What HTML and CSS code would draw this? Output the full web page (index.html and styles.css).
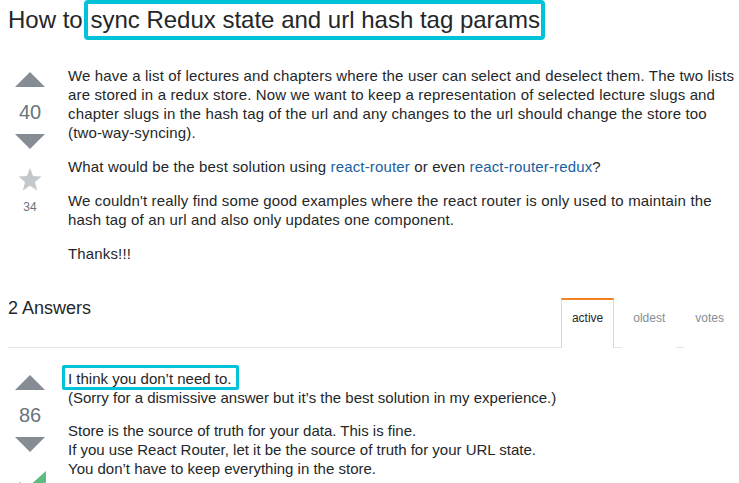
FILE: index.html
```html
<!DOCTYPE html>
<html lang="en">
<head>
<meta charset="utf-8">
<title>How to sync Redux state and url hash tag params</title>
<link rel="stylesheet" href="styles.css">
</head>
<body>
<div class="page">
  <h1 class="title">How to <span class="hl-title">sync Redux state and url hash tag params</span></h1>

  <div class="post question">
    <div class="votecell">
      <span class="arrow up"></span>
      <span class="count">40</span>
      <span class="arrow down"></span>
      <svg class="star" width="24" height="23" viewBox="0 0 24 23" aria-hidden="true">
        <polygon points="12,0 15.1,7.9 23.6,8.5 17,13.9 19.1,22.4 12,17.8 4.9,22.4 7,13.9 0.4,8.5 8.9,7.9" fill="#c4c8cc"/>
      </svg>
      <span class="favcount">34</span>
    </div>
    <div class="postcell question-text">
      <p>We have a list of lectures and chapters where the user can select and deselect them. The two lists are stored in a redux store. Now we want to keep a representation of selected lecture slugs and chapter slugs in the hash tag of the url and any changes to the url should change the store too (two-way-syncing).</p>
      <p>What would be the best solution using <a href="#">react-router</a> or even <a href="#">react-router-redux</a>?</p>
      <p>We couldn't really find some good examples where the react router is only used to maintain the hash tag of an url and also only updates one component.</p>
      <p>Thanks!!!</p>
    </div>
  </div>

  <div class="answers-header">
    <h2 class="answers-title">2 Answers</h2>
    <div class="tabs">
      <a class="tab active" href="#">active</a>
      <a class="tab" href="#">oldest</a>
      <a class="tab" href="#">votes</a>
    </div>
  </div>

  <div class="post answer">
    <div class="votecell">
      <span class="arrow up"></span>
      <span class="count">86</span>
      <span class="arrow down"></span>
      <svg class="check" width="34" height="31" viewBox="0 0 34 31" aria-hidden="true">
        <polygon points="31,0 31,11 12,30 0,18 5,11 12,17" fill="#5eba7d"/>
      </svg>
    </div>
    <div class="postcell answer-text">
      <p><span class="hl-text">I think you don’t need to.</span><br>(Sorry for a dismissive answer but it’s the best solution in my experience.)</p>
      <p>Store is the source of truth for your data. This is fine.<br>If you use React Router, let it be the source of truth for your URL state.<br>You don’t have to keep everything in the store.</p>
    </div>
  </div>
</div>
</body>
</html>
```
FILE: styles.css
```css
html, body {
  margin: 0;
  padding: 0;
  background: #fff;
}

body {
  font-family: "Liberation Sans", Arial, sans-serif;
  color: #242729;
  font-size: 14px;
}

.page {
  padding: 0 4px 0 8px;
}

.title {
  margin: 0;
  font-size: 24px;
  font-weight: normal;
  line-height: 40px;
  white-space: nowrap;
}

.hl-title {
  display: inline-block;
  border: 4px solid #00c3da;
  border-radius: 4px;
  line-height: 32px;
  padding: 0 1px 0 2px;
  margin-left: -5px;
}

.post {
  display: flex;
  align-items: flex-start;
}

.question {
  margin-top: 26px;
}

.votecell {
  width: 44px;
  flex: none;
  display: flex;
  flex-direction: column;
  align-items: center;
  padding-top: 6px;
}

.arrow {
  display: block;
  width: 0;
  height: 0;
  border-left: 15px solid transparent;
  border-right: 15px solid transparent;
}

.arrow.up {
  border-bottom: 15px solid #858c93;
}

.arrow.down {
  border-top: 15px solid #858c93;
}

.count {
  display: block;
  margin-top: 3px;
  font-size: 20px;
  line-height: 44px;
  color: #6a737c;
}

.star {
  display: block;
  margin-top: 19px;
}

.favcount {
  display: block;
  margin-top: 8px;
  font-size: 12px;
  line-height: 16px;
  color: #6a737c;
}

.check {
  display: block;
  margin-top: 19px;
  margin-left: 3px;
}

.postcell {
  flex: 1;
  margin-left: 16px;
  font-size: 15px;
  line-height: 19px;
}

.question-text {
  letter-spacing: 0.15px;
}

.question-text p {
  margin: 0 0 15px;
}

.answer-text p {
  margin: 0 0 14px;
}

.postcell p:last-child {
  margin-bottom: 0;
}

.postcell a {
  color: #1a5e9f;
  text-decoration: none;
}

.answers-header {
  margin-top: 35px;
  height: 49px;
  display: flex;
  justify-content: space-between;
  align-items: flex-start;
  border-bottom: 1px solid #e4e6e8;
}

.answers-title {
  margin: 0;
  font-size: 18px;
  font-weight: normal;
  line-height: 20px;
}

.tabs {
  display: flex;
  align-self: stretch;
  margin-bottom: -1px;
}

.tab {
  display: block;
  margin-left: 8px;
  padding: 11px 10px 0;
  border: 1px solid transparent;
  border-top-width: 2px;
  border-bottom: none;
  font-size: 12px;
  line-height: 15px;
  color: #848d95;
  text-decoration: none;
  background: #fff;
}

.tab.active {
  color: #242729;
  border-color: #f48024 #d6d9dc #d6d9dc;
}

.answer {
  margin-top: 21px;
}

.hl-text {
  border: 3px solid #00c3da;
  border-radius: 2px;
  padding: 2px 5px 0 3px;
  margin-left: -6px;
}
```
